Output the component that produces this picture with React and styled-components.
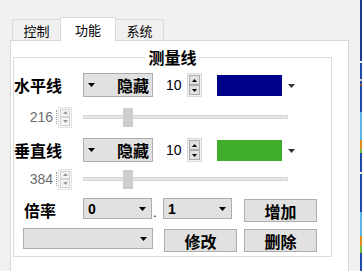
import React from 'react';
import styled, { createGlobalStyle } from 'styled-components';

const Global = createGlobalStyle`
  html, body { margin: 0; padding: 0; background: #f0f0f0; }
  body { font-family: "Liberation Sans", "Noto Sans CJK SC", sans-serif; color: #000; }
  * { box-sizing: border-box; }
`;

const Screen = styled.div`
  width: 362px;
  height: 271px;
  overflow: hidden;
  display: flex;
  background: #f0f0f0;
`;

const Window = styled.div`
  flex: 1;
  min-width: 0;
  padding: 17px 0 0 10px;
`;

const EdgeStrip = styled.div`
  width: 2px;
  background: linear-gradient(
    to bottom,
    #1b3c8e 0 61px, #ffffff 61px 63px, #1e4aa8 63px 79px, #c9c9c9 79px 81px,
    #1e4aa8 81px 84px, #a0522d 84px 86px, #1e4aa8 86px 112px, #5cb3e6 112px 140px,
    #e08a1e 140px 149px, #77bb3a 149px 153px, #1e4aa8 153px 172px, #ffffff 172px 174px,
    #1e4aa8 174px 212px, #5cb3e6 212px 236px, #e08a1e 236px 246px, #77bb3a 246px 253px,
    #1e4aa8 253px
  );
`;

const TabBar = styled.div`
  display: flex;
  align-items: flex-end;
  height: 23px;
  padding-left: 2px;
  position: relative;
  z-index: 1;
`;

const Tab = styled.div`
  width: ${p => p.$w}px;
  height: ${p => (p.$active ? 24 : 21)}px;
  margin-bottom: ${p => (p.$active ? -1 : 0)}px;
  background: ${p => (p.$active ? '#ffffff' : '#f0f0f0')};
  border: 1px solid #d9d9d9;
  border-bottom: none;
  ${p => p.$noLeft && 'border-left: none;'}
  ${p => p.$noRight && 'border-right: none;'}
  display: flex;
  align-items: center;
  justify-content: center;
  font-family: "Noto Sans CJK SC", sans-serif;
  font-size: 13px;
  line-height: 1;
  padding-top: ${p => (p.$active ? 0 : 1)}px;
`;

const Panel = styled.div`
  width: 339px;
  height: 240px;
  background: #ffffff;
  border: 1px solid #d9d9d9;
  padding: 6px 0 0 2px;
`;

const Group = styled.fieldset`
  margin: 0;
  width: 319px;
  min-width: 0;
  padding: 6px 0 4px 0;
  border: 1px solid #dcdcdc;
  display: flex;
  flex-direction: column;
`;

const GroupTitle = styled.legend`
  margin: 0 auto;
  padding: 0 2px;
  font-family: "Noto Sans CJK SC", sans-serif;
  font-size: 16px;
  line-height: 20px;
  font-weight: bold;
`;

const Row = styled.div`
  display: flex;
  align-items: ${p => p.$align || 'center'};
  height: ${p => p.$h}px;
  margin-top: ${p => p.$mt || 0}px;
`;

const Label = styled.div`
  width: ${p => p.$w}px;
  margin-left: ${p => p.$ml || 0}px;
  align-self: center;
  font-family: "Noto Sans CJK SC", sans-serif;
  font-size: 16px;
  font-weight: bold;
  line-height: 20px;
  white-space: nowrap;
`;

const Tri = ({ w = 7, h = 4, color = '#000', up = false }) => (
  <svg width={w} height={h} viewBox={`0 0 ${w} ${h}`} style={{ display: 'block' }}>
    <path d={up ? `M0 ${h}H${w}L${w / 2} 0Z` : `M0 0H${w}L${w / 2} ${h}Z`} fill={color} />
  </svg>
);

const Dropdown = styled.div`
  width: 70px;
  height: 24px;
  background: #e1e1e1;
  border: 1px solid #adadad;
  display: flex;
  align-items: center;
  justify-content: space-between;
  padding: 0 3px 0 4px;
  font-family: "Noto Sans CJK SC", sans-serif;
  font-size: 16px;
  font-weight: bold;
  line-height: 20px;
`;

const WidthText = styled.div`
  width: 21px;
  margin-left: 13px;
  font-size: 14px;
  line-height: 16px;
`;

const Spin = styled.div`
  width: ${p => p.$w}px;
  height: ${p => p.$h}px;
  margin-left: ${p => p.$ml || 0}px;
  border: 1px solid ${p => (p.$disabled ? '#e3e3e3' : '#dadada')};
  background: ${p => (p.$disabled ? '#f7f7f7' : '#f0f0f0')};
  padding: 1px;
  display: flex;
  flex-direction: column;
`;

const SpinBtn = styled.div`
  flex: 1;
  display: flex;
  align-items: center;
  justify-content: center;
  background: ${p => (p.$disabled ? '#f4f4f4' : '#e1e1e1')};
  border: 1px solid ${p => (p.$disabled ? '#d4d4d4' : '#adadad')};
`;

const Swatch = styled.div`
  width: 65px;
  height: 21px;
  margin-left: 15px;
  background: ${p => p.$color};
`;

const ColorArrow = styled.div`
  margin-left: 6px;
  padding-top: 1px;
`;

const NumField = styled.div`
  width: 43px;
  height: 14px;
  border-right: 1px dotted #9a9a9a;
  padding-right: 3px;
  text-align: right;
  font-size: 14px;
  line-height: 14px;
  color: #6d6d6d;
`;

const Slider = styled.div`
  width: 205px;
  height: 19px;
  margin-left: 11px;
  display: flex;
  align-items: center;
`;

const Track = styled.div`
  position: relative;
  width: 100%;
  height: 4px;
  background: #e7e7e7;
  border: 1px solid #d6d6d6;
`;

const Thumb = styled.div`
  position: absolute;
  top: -8px;
  width: 10px;
  height: 19px;
  background: #cdcdcd;
`;

const Combo = styled.div`
  width: ${p => p.$w}px;
  height: 21px;
  margin-left: ${p => p.$ml || 0}px;
  background: #e1e1e1;
  border: 1px solid #adadad;
  display: flex;
  align-items: center;
  justify-content: space-between;
  padding: 0 5px 0 4px;
  font-size: 14px;
  font-weight: bold;
  line-height: 16px;
`;

const Dot = styled.div`
  width: 11px;
  align-self: flex-end;
  padding: 0 0 4px 1px;
  font-size: 13px;
  line-height: 10px;
`;

const Button = styled.div`
  width: 73px;
  height: 23px;
  margin-top: 1px;
  margin-left: ${p => p.$ml || 0}px;
  background: #e1e1e1;
  border: 1px solid #adadad;
  display: flex;
  align-items: center;
  justify-content: center;
  font-family: "Noto Sans CJK SC", sans-serif;
  font-size: 16px;
  font-weight: bold;
  line-height: 20px;
`;

const SpinBox = ({ w, h, ml, disabled }) => {
  const c = disabled ? '#9a9a9a' : '#000';
  return (
    <Spin $w={w} $h={h} $ml={ml} $disabled={disabled}>
      <SpinBtn $disabled={disabled}><Tri w={5} h={3} up color={c} /></SpinBtn>
      <SpinBtn $disabled={disabled}><Tri w={5} h={3} color={c} /></SpinBtn>
    </Spin>
  );
};

const LineRow = ({ label, color, mt }) => (
  <Row $h={24} $mt={mt}>
    <Label $w={69}>{label}</Label>
    <Dropdown>
      <Tri w={7} h={4} />
      <span>隐藏</span>
    </Dropdown>
    <WidthText>10</WidthText>
    <SpinBox w={15} h={24} />
    <Swatch $color={color} />
    <ColorArrow><Tri w={7} h={4} color="#333" /></ColorArrow>
  </Row>
);

const SliderRow = ({ value, ratio, mt }) => (
  <Row $h={22} $mt={mt}>
    <NumField>{value}</NumField>
    <SpinBox w={14} h={21} ml={1} disabled />
    <Slider>
      <Track>
        <Thumb style={{ left: `${Math.round(ratio * 195) - 1}px` }} />
      </Track>
    </Slider>
  </Row>
);

export default function App() {
  return (
    <>
      <Global />
      <Screen>
        <Window>
          <TabBar>
            <Tab $w={48} $noRight>控制</Tab>
            <Tab $w={56} $active>功能</Tab>
            <Tab $w={48} $noLeft>系统</Tab>
          </TabBar>
          <Panel>
            <Group>
              <GroupTitle>测量线</GroupTitle>
              <LineRow label="水平线" color="#00008b" />
              <SliderRow value="216" ratio={0.205} mt={9} />
              <LineRow label="垂直线" color="#40ad2b" mt={10} />
              <SliderRow value="384" ratio={0.205} mt={6} />
              <Row $h={24} $mt={8} $align="flex-start">
                <Label $w={59} $ml={10}>倍率</Label>
                <Combo $w={69}>
                  <span>0</span>
                  <Tri w={7} h={4} />
                </Combo>
                <Dot>.</Dot>
                <Combo $w={69}>
                  <span>1</span>
                  <Tri w={7} h={4} />
                </Combo>
                <Button $ml={12}>增加</Button>
              </Row>
              <Row $h={24} $mt={6} $align="flex-start">
                <Combo $w={130} $ml={9}>
                  <span />
                  <Tri w={7} h={4} />
                </Combo>
                <Button $ml={11}>修改</Button>
                <Button $ml={7}>删除</Button>
              </Row>
            </Group>
          </Panel>
        </Window>
        <EdgeStrip />
      </Screen>
    </>
  );
}
